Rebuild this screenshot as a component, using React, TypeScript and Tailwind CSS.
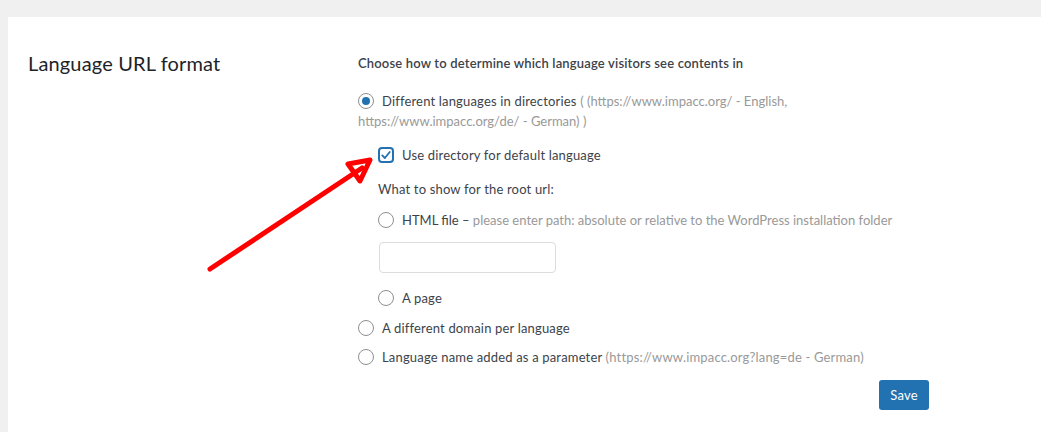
import React from "react";

const font = { fontFamily: '"Lato", "Liberation Sans", sans-serif' };

function Radio({ checked = false }: { checked?: boolean }) {
  return (
    <span className="w-[16px] h-[16px] shrink-0 rounded-full border border-[#8c8f94] bg-white flex items-center justify-center">
      {checked && <span className="w-[8px] h-[8px] rounded-full bg-[#2271b1]" />}
    </span>
  );
}

function Checkbox() {
  return (
    <span className="w-[16px] h-[16px] shrink-0 rounded-[4px] border-2 border-[#2271b1] bg-white flex items-center justify-center">
      <svg viewBox="0 0 16 16" className="w-[12px] h-[12px]">
        <path d="M3 8.5 L6.5 12 L13 4" fill="none" stroke="#2271b1" strokeWidth="2.4" strokeLinecap="round" strokeLinejoin="round" />
      </svg>
    </span>
  );
}

function Row({ children, indent = false, className = "" }: { children: React.ReactNode; indent?: boolean; className?: string }) {
  return (
    <div className={`flex items-center gap-[8px] h-[20px] ${indent ? "ml-[20px]" : ""} ${className}`}>{children}</div>
  );
}

export default function App() {
  return (
    <div className="relative min-h-[432px] bg-[#f0f0f1] pt-[17px] pl-[8px] overflow-hidden text-[13px] tracking-[0.17px] text-[#3c434a]" style={font}>
      <div className="bg-white min-h-[415px] pt-[36px] pl-[20px] flex">
        <h2 className="w-[330px] shrink-0 text-[20px] leading-[20px] tracking-[0.15px] text-[#1d2327]">Language URL format</h2>

        <div className="w-[571px] flex flex-col leading-[20px]">
          <p className="font-semibold text-[#3c434a]">Choose how to determine which language visitors see contents in</p>

          <div className="mt-[18px]">
            <div className="flex items-center gap-[8px] h-[20px]">
              <Radio checked />
              <span>
                Different languages in directories <span className="text-[#999] tracking-normal">( (https://www.impacc.org/ - English,</span>
              </span>
            </div>
            <div className="text-[#999] tracking-normal">https://www.impacc.org/de/ - German) )</div>
          </div>

          <Row indent className="mt-[14px]">
            <Checkbox />
            <span>Use directory for default language</span>
          </Row>

          <div className="mt-[14px] ml-[20px] h-[20px]">What to show for the root url:</div>

          <Row indent className="mt-[11px] gap-[6px] tracking-normal">
            <Radio />
            <span>
              HTML file – <span className="text-[#999]">please enter path: absolute or relative to the WordPress installation folder</span>
            </span>
          </Row>

          <input className="mt-[12px] ml-[21px] w-[177px] h-[31px] border border-[#dcdcde] rounded-[4px] bg-white outline-none" />

          <Row indent className="mt-[15px] gap-[6px]">
            <Radio />
            <span>A page</span>
          </Row>

          <Row className="mt-[10px]">
            <Radio />
            <span>A different domain per language</span>
          </Row>

          <Row className="mt-[9px]">
            <Radio />
            <span>
              Language name added as a parameter <span className="text-[#999]">(https://www.impacc.org?lang=de - German)</span>
            </span>
          </Row>

          <div className="mt-[13px] flex justify-end">
            <button className="h-[30px] w-[50px] rounded-[3px] bg-[#2271b1] text-white text-[13px] leading-[28px]">Save</button>
          </div>
        </div>
      </div>

      <svg className="absolute left-0 top-0 pointer-events-none" width="1041" height="432" viewBox="0 0 1041 432">
        <g fill="none" stroke="#ff0000" strokeWidth="5" strokeLinecap="round" strokeLinejoin="round">
          <path d="M210 269 L362 168" />
          <path d="M348 164 L370 160 L360 181 Z" />
        </g>
      </svg>
    </div>
  );
}
